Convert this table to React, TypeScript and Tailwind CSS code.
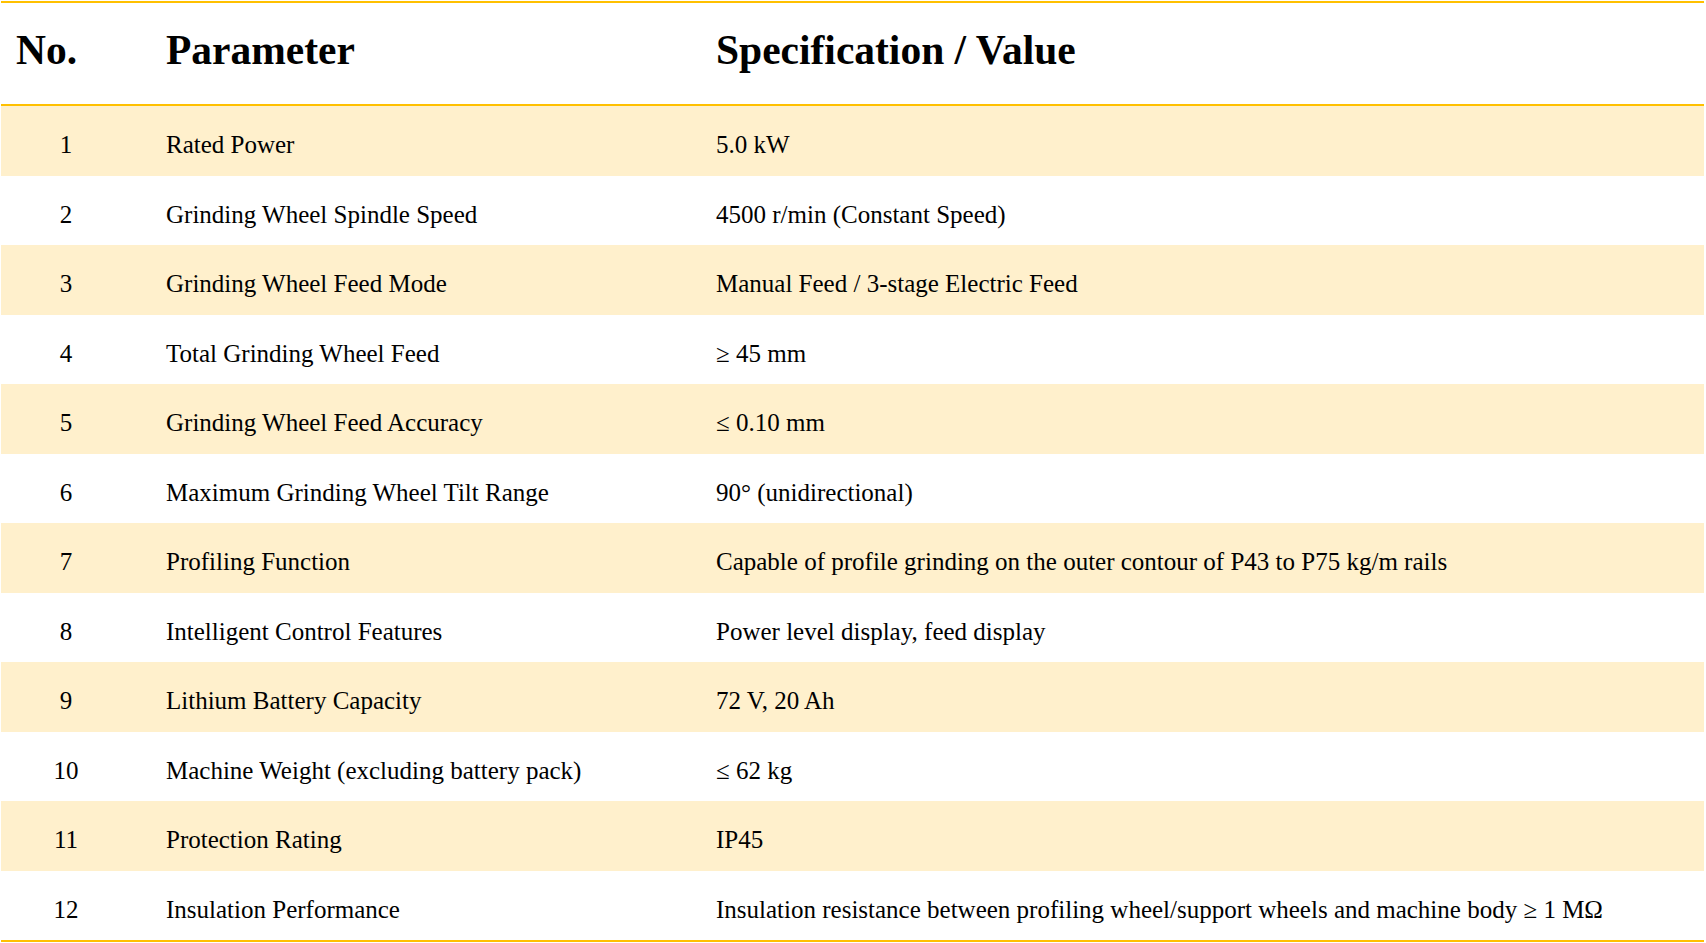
const specs: [string, string][] = [
  ["Rated Power", "5.0 kW"],
  ["Grinding Wheel Spindle Speed", "4500 r/min (Constant Speed)"],
  ["Grinding Wheel Feed Mode", "Manual Feed / 3-stage Electric Feed"],
  ["Total Grinding Wheel Feed", "≥ 45 mm"],
  ["Grinding Wheel Feed Accuracy", "≤ 0.10 mm"],
  ["Maximum Grinding Wheel Tilt Range", "90° (unidirectional)"],
  ["Profiling Function", "Capable of profile grinding on the outer contour of P43 to P75 kg/m rails"],
  ["Intelligent Control Features", "Power level display, feed display"],
  ["Lithium Battery Capacity", "72 V, 20 Ah"],
  ["Machine Weight (excluding battery pack)", "≤ 62 kg"],
  ["Protection Rating", "IP45"],
  ["Insulation Performance", "Insulation resistance between profiling wheel/support wheels and machine body ≥ 1 MΩ"],
];

export default function App() {
  return (
    <div className="min-h-screen bg-white p-px font-['Liberation_Serif','Times_New_Roman',serif] text-black">
      <div className="w-[1703px] border-y-2 border-[#ffc000]">
        <div className="flex h-[103px] items-center border-b-2 border-[#ffc000] pb-[6px] text-[41.5px] font-bold">
          <div className="w-[150px] pl-[15px]">No.</div>
          <div className="w-[550px] pl-[15px]">Parameter</div>
          <div className="flex-1 pl-[15px]">Specification / Value</div>
        </div>
        {specs.map(([param, value], i) => (
          <div
            key={param}
            className={`flex h-[69.5px] items-center pt-2 text-[25px] ${i % 2 === 0 ? "bg-[#fff0cc]" : "bg-white"}`}
          >
            <div className="w-[150px]">
              <div className="w-[130px] text-center">{i + 1}</div>
            </div>
            <div className="w-[550px] pl-[15px]">{param}</div>
            <div className="flex-1 pl-[15px]">{value}</div>
          </div>
        ))}
      </div>
    </div>
  );
}
